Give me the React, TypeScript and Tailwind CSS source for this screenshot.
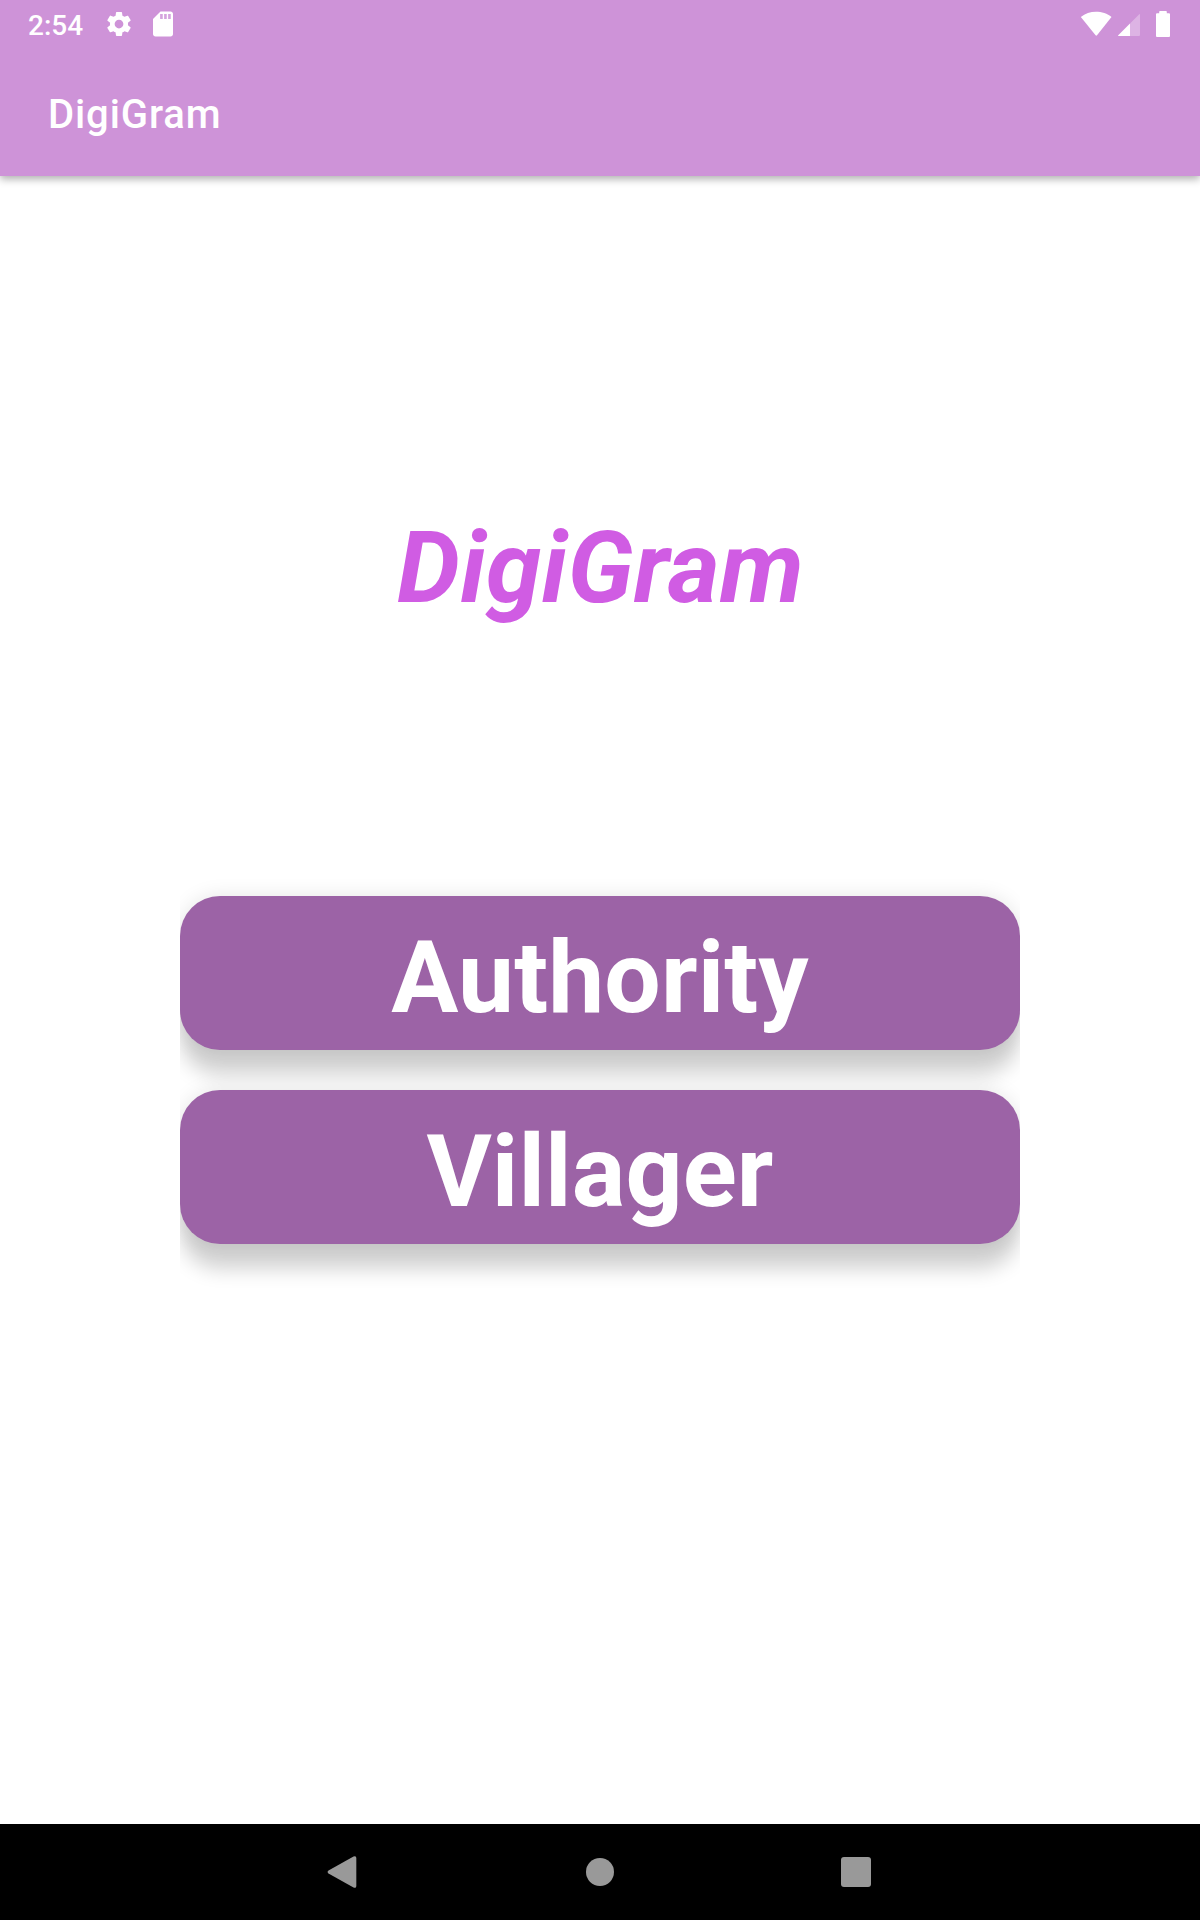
function StatusBar() {
  return (
    <div className="flex h-12 items-start pl-7 text-white">
      <span className="mt-[9px] w-[76px] text-[28px] leading-[34px] font-medium">2:54</span>
      <svg className="mt-[9px] size-[30px]" viewBox="0 0 24 24" fill="currentColor">
        <path d="M19.14 12.94c.04-.3.06-.61.06-.94 0-.32-.02-.64-.07-.94l2.03-1.58c.18-.14.23-.41.12-.61l-1.92-3.32c-.12-.22-.37-.29-.59-.22l-2.39.96c-.5-.38-1.03-.7-1.62-.94l-.36-2.54c-.04-.24-.24-.41-.48-.41h-3.84c-.24 0-.43.17-.47.41l-.36 2.54c-.59.24-1.13.57-1.62.94l-2.39-.96c-.22-.08-.47 0-.59.22L2.74 8.87c-.12.21-.08.47.12.61l2.03 1.58c-.05.3-.09.63-.09.94s.02.64.07.94l-2.03 1.58c-.18.14-.23.41-.12.61l1.92 3.32c.12.22.37.29.59.22l2.39-.96c.5.38 1.03.7 1.62.94l.36 2.54c.05.24.24.41.48.41h3.84c.24 0 .44-.17.47-.41l.36-2.54c.59-.24 1.13-.56 1.62-.94l2.39.96c.22.08.47 0 .59-.22l1.92-3.32c.12-.22.07-.47-.12-.61l-2.01-1.58zM12 15.500c-1.930 0-3.500-1.570-3.500-3.500s1.570-3.500 3.500-3.500 3.500 1.570 3.500 3.500-1.570 3.500-3.500 3.500z" />
      </svg>
      <svg className="mt-[9px] ml-[14px] size-[30px]" viewBox="0 0 24 24" fill="currentColor">
        <path d="M18 2h-8L4 8v12c0 1.100.9 2 2 2h12c1.100 0 2-.9 2-2V4c0-1.100-.9-2-2-2z" />
        <path className="fill-[#ce93d8]" fillOpacity=".85" d="M9.700 4h2.100v4H9.700zM12.900 4h2.100v4h-2.100zM16.100 4h2.100v4h-2.100z" />
      </svg>
      <svg className="mt-[11px] ml-auto h-[25px] w-8" viewBox="0 0 32 25" fill="currentColor">
        <path d="M.8 6C5 2.300 10.500.7 16 .7S27.500 2.300 31.500 6L17 24.300Q16.300 25.100 15.600 24.300Z" />
      </svg>
      <svg className="mt-[14px] ml-[6px] size-[22px]" viewBox="0 0 22 22" fill="currentColor">
        <path fillOpacity=".3" d="M12 9.500 21 .5Q22-.5 22 1v20q0 1-1 1h-9Z" />
        <path d="M12 9.500V22H1Q-.5 22 .5 21Z" />
      </svg>
      <svg className="mt-[11px] mr-[30px] ml-4 h-[26px] w-[14px]" viewBox="0 0 14 26" fill="currentColor">
        <path d="M4 0h6q.8 0 .8.800V2.200h2.200Q14 2.200 14 3.200v21.800Q14 26 13 26h-12Q0 26 0 25V3.200Q0 2.200 1 2.200h2.200V.8Q3.200 0 4 0Z" />
      </svg>
    </div>
  );
}

function RoleButton({ label }: { label: string }) {
  return (
    <button className="flex h-[154px] w-full justify-center rounded-[40px] bg-[#9c63a6] pt-[23px] text-[100px] leading-[117px] font-bold tracking-[0.15px] text-white shadow-[0_25px_20px_rgba(0,0,0,0.18),0_0_20px_rgba(0,0,0,0.1)]">
      {label}
    </button>
  );
}

export default function App() {
  return (
    <div className="flex h-[1920px] w-[1200px] flex-col overflow-hidden bg-white font-['Roboto',sans-serif]">
      <header className="relative h-44 shrink-0 bg-[#ce93d8] shadow-[0_3px_8px_rgba(0,0,0,0.32)]">
        <StatusBar />
        <h1 className="pt-[43px] pl-12 text-[40px] leading-[47px] font-medium tracking-[0.9px] text-white">DigiGram</h1>
      </header>
      <main className="flex flex-1 flex-col items-center">
        <h2 className="mt-[333px] h-[117px] pl-px text-[100px] leading-[117px] font-bold tracking-[0.15px] text-[#d05ce3] italic">DigiGram</h2>
        <div className="mt-[230px] flex w-[840px] flex-col gap-10 pt-10 pb-12 [clip-path:inset(0)]">
          <RoleButton label="Authority" />
          <RoleButton label="Villager" />
        </div>
      </main>
      <nav className="flex h-24 shrink-0 items-center bg-black pl-[327px] text-[#999]">
        <svg className="h-8 w-[30px]" viewBox="0 0 30 32" fill="currentColor">
          <path d="M1.500 14.600 26.500.5Q29.300-.7 29.300 2v28q0 2.700-2.800 1.500L1.500 17.400Q-.3 16 1.500 14.600Z" />
        </svg>
        <div className="ml-[229px] size-7 rounded-full bg-[#999]" />
        <div className="ml-[227px] size-[30px] rounded-[3px] bg-[#999]" />
      </nav>
    </div>
  );
}
